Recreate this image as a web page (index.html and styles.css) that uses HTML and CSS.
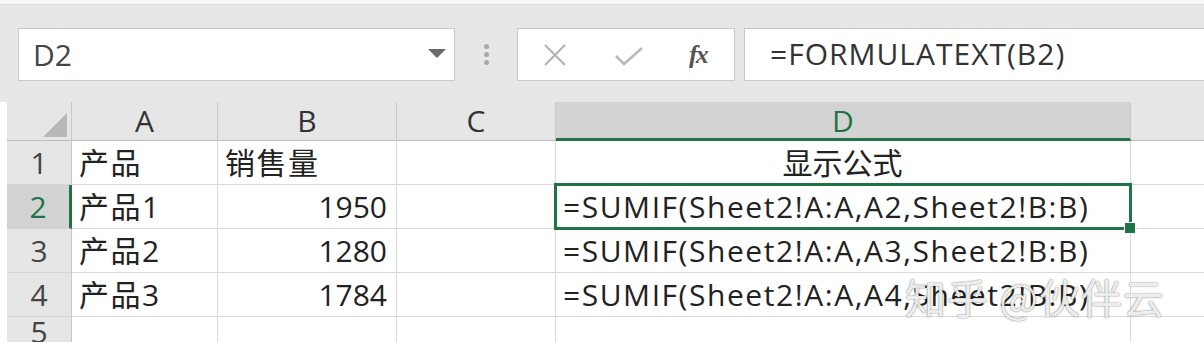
FILE: index.html
```html
<!DOCTYPE html>
<html lang="zh-CN">
<head>
<meta charset="utf-8">
<title>Excel FORMULATEXT</title>
<link rel="stylesheet" href="styles.css">
</head>
<body>
<div class="app">
  <div class="topstrip"></div>
  <div class="fbar">
    <div class="namebox">
      <span class="name">D2</span>
      <svg class="arrow" width="18" height="10" viewBox="0 0 18 10"><polygon points="0,0 18,0 9,9" fill="#6a6a6a"/></svg>
    </div>
    <div class="dots"><i></i><i></i><i></i></div>
    <div class="btns">
      <svg class="ic-x" width="24" height="22" viewBox="0 0 24 22"><path d="M2 1 L22 21 M22 1 L2 21" stroke="#b4b4b4" stroke-width="2.2" fill="none"/></svg>
      <svg class="ic-ok" width="28" height="20" viewBox="0 0 28 20"><path d="M1 10 L9 18 L27 2" stroke="#b9b9b9" stroke-width="2.6" fill="none"/></svg>
      <span class="fx">fx</span>
    </div>
    <div class="formula">=FORMULATEXT(B2)</div>
  </div>
  <div class="sheet">
    <div class="gutter"></div>
    <div class="hd corner"><svg width="24" height="24" viewBox="0 0 24 24"><polygon points="24,0 24,24 0,24" fill="#b8b8b8"/></svg></div>
    <div class="hd col">A</div>
    <div class="hd col">B</div>
    <div class="hd col">C</div>
    <div class="hd col sel">D</div>
    <div class="hd col last"></div>

    <div class="gutter"></div>
    <div class="rh">1</div>
    <div class="c">产品</div>
    <div class="c">销售量</div>
    <div class="c"></div>
    <div class="c center">显示公式</div>
    <div class="c last"></div>

    <div class="gutter"></div>
    <div class="rh sel">2</div>
    <div class="c">产品1</div>
    <div class="c num">1950</div>
    <div class="c"></div>
    <div class="c active">=SUMIF(Sheet2!A:A,A2,Sheet2!B:B)</div>
    <div class="c last"></div>

    <div class="gutter"></div>
    <div class="rh">3</div>
    <div class="c">产品2</div>
    <div class="c num">1280</div>
    <div class="c"></div>
    <div class="c">=SUMIF(Sheet2!A:A,A3,Sheet2!B:B)</div>
    <div class="c last"></div>

    <div class="gutter"></div>
    <div class="rh">4</div>
    <div class="c">产品3</div>
    <div class="c num">1784</div>
    <div class="c"></div>
    <div class="c">=SUMIF(Sheet2!A:A,A4,Sheet2!B:B)</div>
    <div class="c last"></div>

    <div class="gutter"></div>
    <div class="rh">5</div>
    <div class="c"></div>
    <div class="c"></div>
    <div class="c"></div>
    <div class="c"></div>
    <div class="c last"></div>
  </div>
  <div class="watermark">知乎 @伙伴云</div>
</div>
</body>
</html>
```

FILE: styles.css
```css
* { box-sizing: border-box; }
html, body { margin: 0; padding: 0; }
body {
  width: 1204px;
  height: 342px;
  overflow: hidden;
  background: #ffffff;
  font-family: "Open Sans", "Noto Sans CJK SC", sans-serif;
  color: #222222;
}
.app {
  position: relative;
  width: 1204px;
  height: 342px;
  overflow: hidden;
}
.topstrip {
  height: 5px;
  background: #f7f7f7;
  border-bottom: 1px solid #dcdcdc;
}
.fbar {
  height: 97px;
  background: #e7e7e7;
  display: flex;
  align-items: flex-start;
  padding-top: 23px;
  padding-left: 18px;
  overflow: hidden;
}
.fbar > * { flex-shrink: 0; }
.namebox {
  width: 437px;
  height: 53px;
  background: #ffffff;
  border: 1px solid #c9c9c9;
  display: flex;
  align-items: center;
  justify-content: space-between;
  padding: 0 8px 0 14px;
}
.name {
  font-size: 30px;
  color: #444444;
}
.arrow { margin-bottom: 2px; }
.dots {
  width: 62px;
  height: 53px;
  display: flex;
  flex-direction: column;
  align-items: center;
  justify-content: center;
  gap: 3px;
}
.dots i {
  display: block;
  width: 5px;
  height: 5px;
  border-radius: 50%;
  background: #a9a9a9;
}
.btns {
  width: 218px;
  height: 53px;
  background: #ffffff;
  border: 1px solid #c9c9c9;
  display: flex;
  align-items: center;
  padding-left: 25px;
}
.ic-x { margin-right: 48px; }
.ic-ok { margin-right: 46px; margin-top: 2px; }
.fx {
  font-family: "Liberation Serif", serif;
  font-style: italic;
  font-weight: bold;
  font-size: 26px;
  color: #555555;
  letter-spacing: -2px;
}
.formula {
  margin-left: 9px;
  width: 480px;
  height: 53px;
  background: #ffffff;
  border: 1px solid #c9c9c9;
  border-right: none;
  font-size: 30px;
  letter-spacing: 1px;
  line-height: 50px;
  padding-left: 25px;
  color: #333333;
}
.sheet {
  display: grid;
  grid-template-columns: 7px 65px 146px 179px 159px 575px 1fr;
  grid-template-rows: 39px 44px 44px 44px 44px 1fr;
  height: 240px;
}
.gutter { background: #ffffff; }
.hd {
  background: #e6e6e6;
  border-right: 1px solid #c9c9c9;
  border-bottom: 1px solid #bcbcbc;
  font-size: 30px;
  color: #333333;
  display: flex;
  align-items: center;
  justify-content: center;
  line-height: 1;
}
.hd.corner {
  align-items: flex-end;
  justify-content: flex-end;
  padding: 0 4px 3px 0;
}
.hd.sel {
  background: #d3d3d3;
  color: #217346;
  border-bottom: 3px solid #217346;
  padding-top: 2px;
}
.hd.last { border-right: none; }
.rh {
  background: #e6e6e6;
  border-right: 1px solid #c9c9c9;
  border-bottom: 1px solid #d4d4d4;
  font-size: 30px;
  color: #444444;
  display: flex;
  align-items: center;
  justify-content: center;
  line-height: 1;
}
.rh.sel {
  background: #d3d3d3;
  color: #217346;
  border-right: 3px solid #217346;
}
.c {
  border-right: 1px solid #dadada;
  border-bottom: 1px solid #dadada;
  font-size: 30px;
  letter-spacing: 1.55px;
  display: flex;
  align-items: center;
  padding: 0 8px 0 7px;
  white-space: nowrap;
  line-height: 1;
  color: #222222;
}
.c.num { justify-content: flex-end; padding-right: 9px; letter-spacing: 0; }
.c.center { justify-content: center; letter-spacing: 0; }
.c.last { border-right: none; }
.c.active { position: relative; }
.c.active::before {
  content: "";
  position: absolute;
  left: -2px;
  top: -2px;
  right: -2px;
  bottom: -2px;
  border: 3px solid #217346;
}
.c.active::after {
  content: "";
  position: absolute;
  right: -6px;
  bottom: -6px;
  width: 10px;
  height: 10px;
  background: #217346;
  border: 1px solid #ffffff;
}
.watermark {
  position: absolute;
  left: 905px;
  top: 266px;
  font-family: "Noto Sans CJK SC", sans-serif;
  font-size: 41px;
  color: rgba(255, 255, 255, 0.9);
  text-shadow: 0 0 2px rgba(0, 0, 0, 0.45), 0 0 1px rgba(0, 0, 0, 0.3);
  letter-spacing: 1px;
  white-space: nowrap;
}
```
